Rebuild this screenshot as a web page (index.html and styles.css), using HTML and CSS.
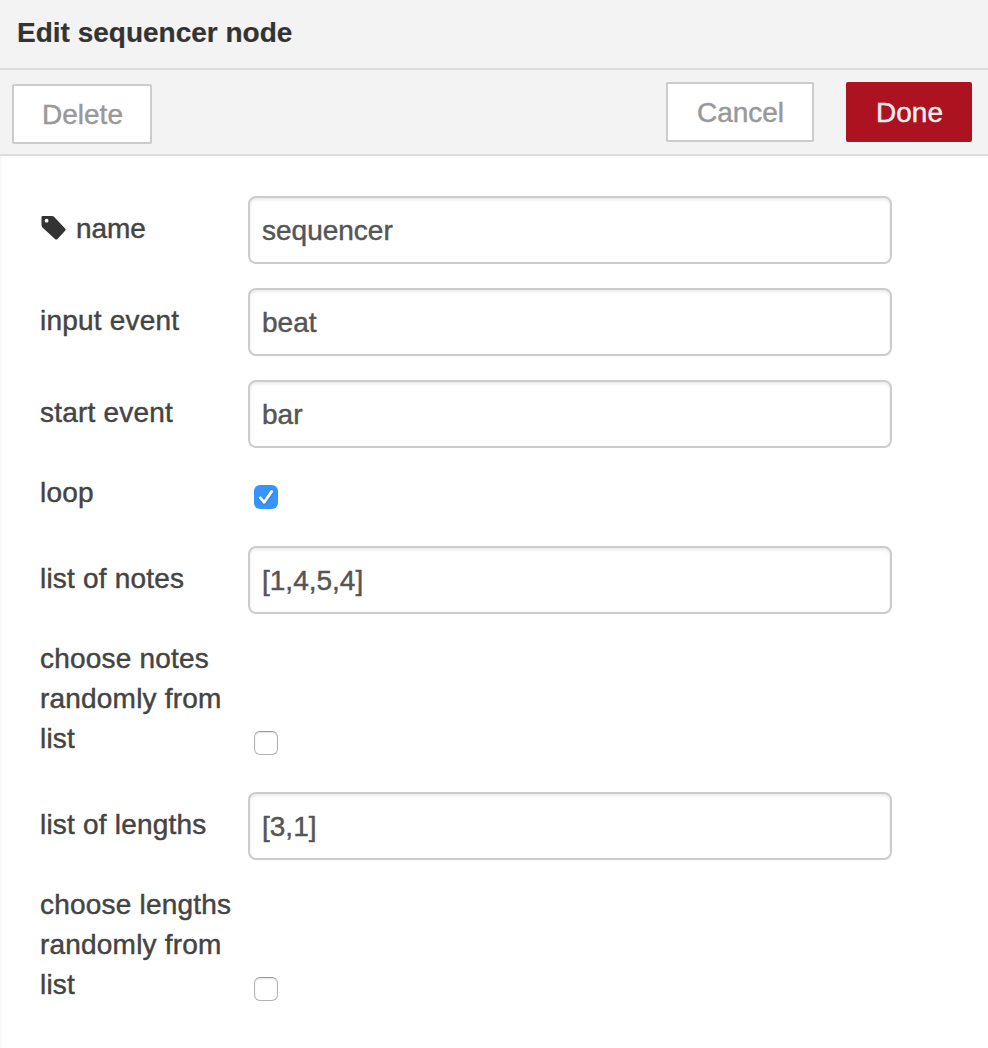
FILE: index.html
```html
<!DOCTYPE html>
<html lang="en">
<head>
<meta charset="utf-8">
<title>Edit sequencer node</title>
<link rel="stylesheet" href="styles.css">
</head>
<body>
<main class="editor">
  <header class="editor-header">Edit sequencer node</header>
  <div class="toolbar">
    <button class="button button-delete">Delete</button>
    <button class="button button-cancel">Cancel</button>
    <button class="button button-primary">Done</button>
  </div>
  <form class="form">
    <div class="row">
      <label class="label label-icon" for="name"><svg class="tag-icon" viewBox="0 0 26 26" width="26" height="26"><path fill="#333" fill-rule="evenodd" d="M2.5 1H11.8Q13.3 1 14.5 2.2L25.1 13.4Q26.2 14.7 25.1 15.8L17.5 24Q16.3 25.2 15 24L2.7 12.7Q1.5 11.5 1.5 10V2.2Q1.5 1 2.5 1ZM6.6 3.8A1.9 1.9 0 1 0 6.6 7.6A1.9 1.9 0 1 0 6.6 3.8Z"/></svg>name</label>
      <input class="field" id="name" type="text" value="sequencer">
    </div>
    <div class="row">
      <label class="label" for="input">input event</label>
      <input class="field" id="input" type="text" value="beat">
    </div>
    <div class="row">
      <label class="label" for="start">start event</label>
      <input class="field" id="start" type="text" value="bar">
    </div>
    <div class="row row-check">
      <label class="label" for="loop">loop</label>
      <span class="check checked" id="loop"><svg viewBox="0 0 24 24" width="24" height="24"><path d="M6.3 12.8L10.2 17.3L17.6 6.6" fill="none" stroke="#fff" stroke-width="2.8" stroke-linecap="round" stroke-linejoin="round"/></svg></span>
    </div>
    <div class="row">
      <label class="label" for="notes">list of notes</label>
      <input class="field" id="notes" type="text" value="[1,4,5,4]">
    </div>
    <div class="row row-check">
      <label class="label" for="random-notes">choose notes randomly from list</label>
      <span class="check" id="random-notes"></span>
    </div>
    <div class="row">
      <label class="label" for="lengths">list of lengths</label>
      <input class="field" id="lengths" type="text" value="[3,1]">
    </div>
    <div class="row row-check">
      <label class="label" for="random-lengths">choose lengths randomly from list</label>
      <span class="check" id="random-lengths"></span>
    </div>
  </form>
</main>
</body>
</html>
```
FILE: styles.css
```css
* { box-sizing: border-box; }
body {
  margin: 0;
  background: #fff;
  color: #444;
  font: 28px/40px "Liberation Sans", Arial, sans-serif;
  -webkit-text-stroke: 0.45px currentColor;
}
.editor {
  min-height: 1048px;
  box-shadow: inset 3px 0 3px -2px rgba(0, 0, 0, 0.05);
}
.editor-header {
  height: 70px;
  padding: 13px 17px 0;
  border-bottom: 2px solid #ddd;
  background: #f3f3f3;
  color: #333;
  font-weight: bold;
  -webkit-text-stroke: 0.2px currentColor;
}
.toolbar {
  display: flex;
  align-items: flex-start;
  height: 86px;
  padding: 12px 16px 0 12px;
  border-bottom: 2px solid #ddd;
  background: #f3f3f3;
}
.button {
  height: 60px;
  padding: 2px 0 0 1px;
  border: 2px solid #ccc;
  border-radius: 2px;
  background: #fff;
  color: #999;
  font: inherit;
  -webkit-text-stroke: inherit;
}
.button-delete { width: 140px; margin: 2px auto 0 0; }
.button-cancel { width: 148px; margin-right: 32px; }
.button-primary { width: 126px; border-color: #ad1221; background: #ad1221; color: #eee; }
.form { padding: 40px 40px 0; }
.row { display: flex; margin-bottom: 24px; }
.row-check { align-items: flex-end; margin-bottom: 34px; }
.label { width: 208px; padding-top: 13px; letter-spacing: 0.2px; }
.label-icon { letter-spacing: -0.1px; }
.row-check .label { padding: 1px 14px 0 0; margin-bottom: -1px; }
.tag-icon { margin-right: 10px; vertical-align: -3px; }
.field {
  width: 644px;
  height: 68px;
  padding: 2px 12px 0;
  border: 2px solid #ccc;
  border-radius: 8px;
  background: #fff;
  box-shadow: inset 0 2px 3px rgba(0, 0, 0, 0.08);
  color: #555;
  font: inherit;
  -webkit-text-stroke: inherit;
}
.check {
  width: 24px;
  height: 24px;
  margin: 0 0 3px 6px;
  border: 1px solid #b4b4b4;
  border-top-color: #999;
  border-radius: 6px;
  background: #fff;
  box-shadow: inset 0 1px 2px rgba(0, 0, 0, 0.12);
}
.checked { border: 0; background: #3595fd; box-shadow: none; }
.checked svg { display: block; filter: drop-shadow(0 1px 1px rgba(0, 0, 0, 0.2)); }
```
